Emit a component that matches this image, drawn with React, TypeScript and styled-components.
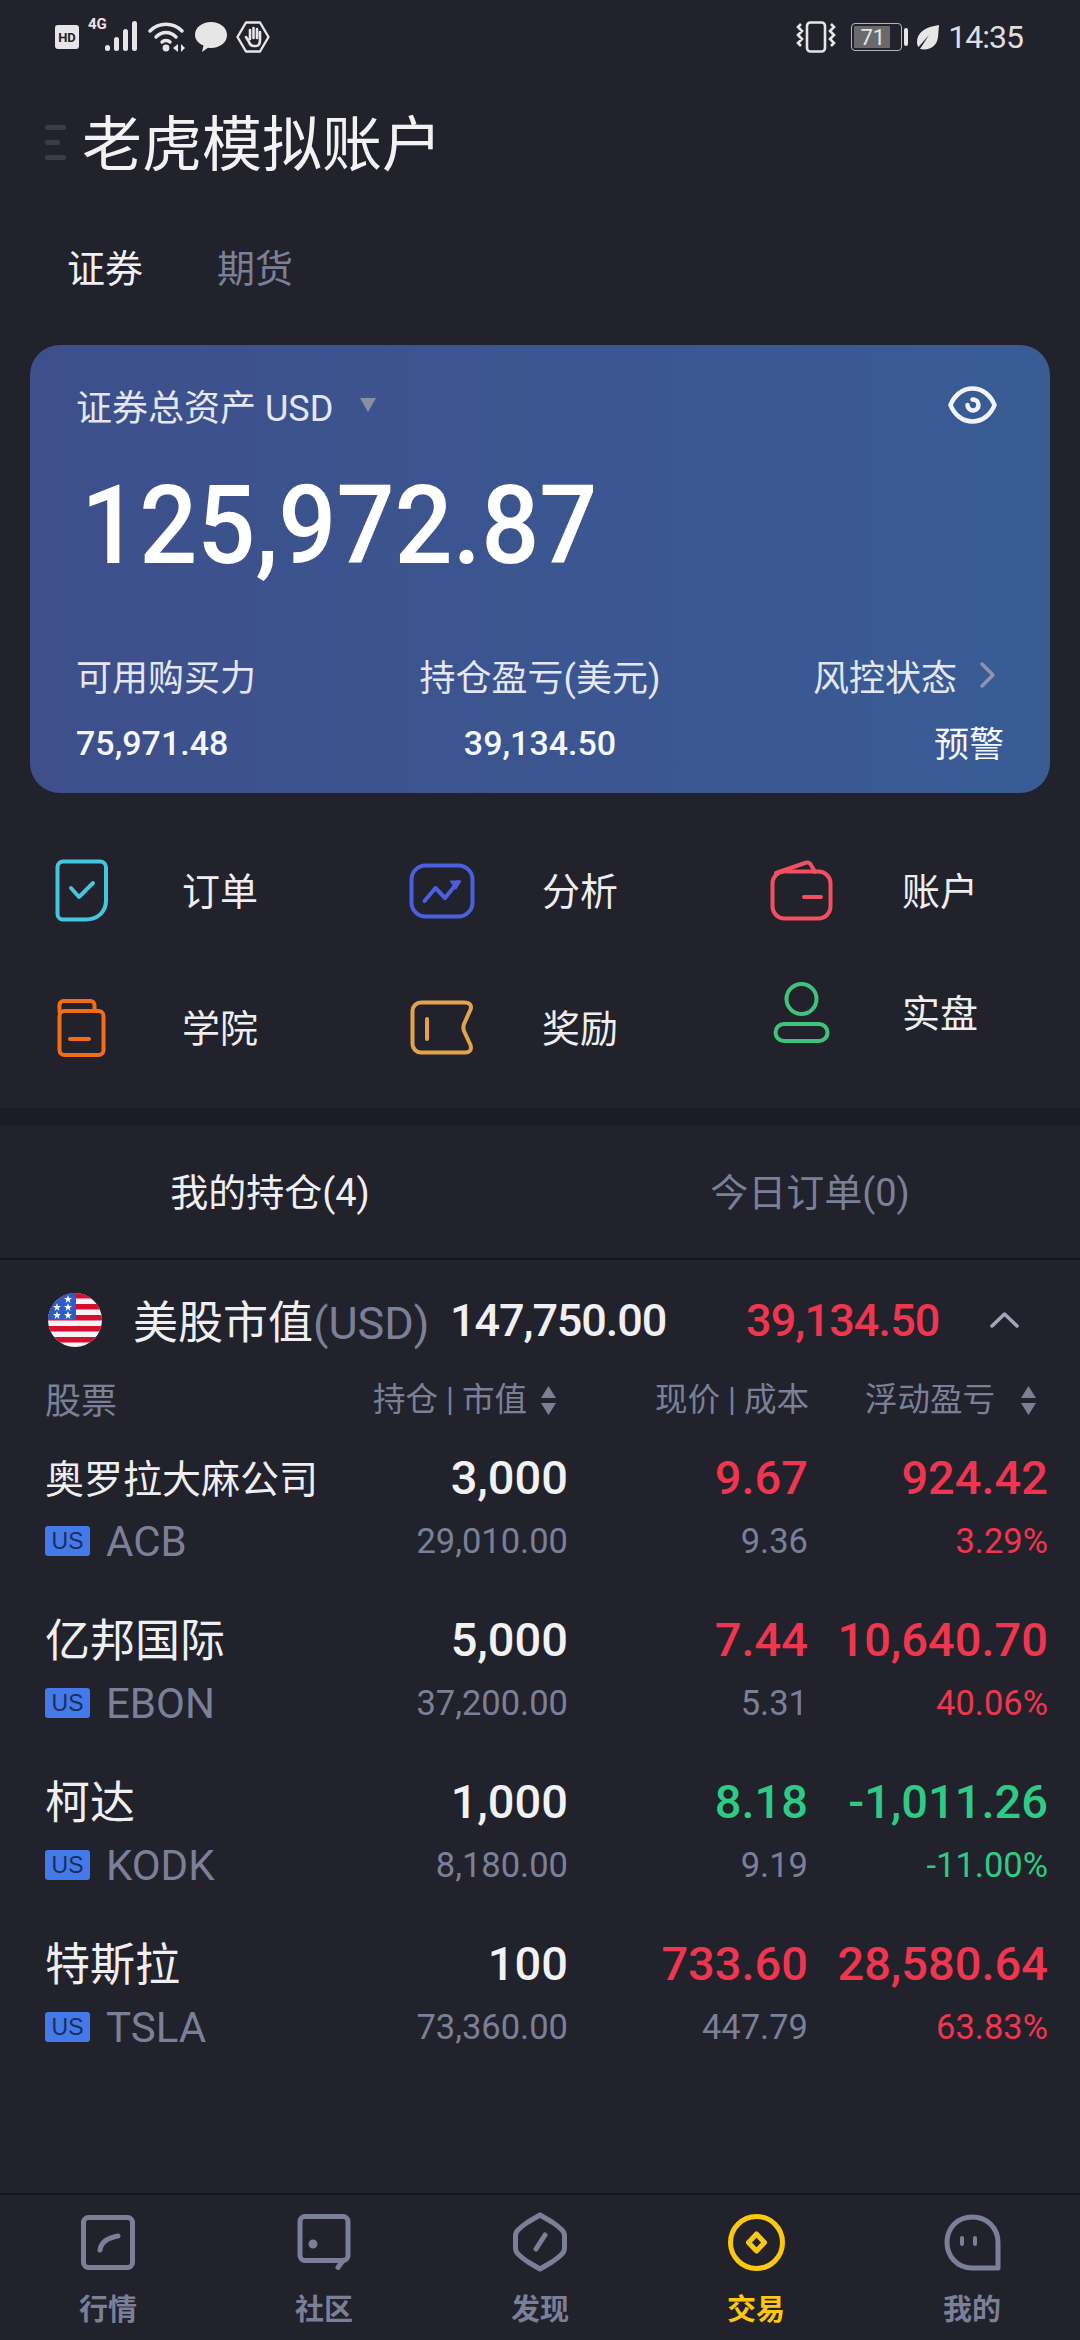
import React from 'react';
import styled, { createGlobalStyle } from 'styled-components';

const RED = '#f0364f';
const GREEN = '#2fcb85';
const MUTED = '#7b8098';
const BG = '#21222c';

const GlobalStyle = createGlobalStyle`
  html, body { margin: 0; padding: 0; background: ${BG}; }
  * { box-sizing: border-box; }
`;

interface Holding {
  name: string;
  code: string;
  qty: string;
  value: string;
  price: string;
  cost: string;
  pnl: string;
  pct: string;
  down?: boolean;
}

const holdings: Holding[] = [
  { name: '奥罗拉大麻公司', code: 'ACB', qty: '3,000', value: '29,010.00', price: '9.67', cost: '9.36', pnl: '924.42', pct: '3.29%' },
  { name: '亿邦国际', code: 'EBON', qty: '5,000', value: '37,200.00', price: '7.44', cost: '5.31', pnl: '10,640.70', pct: '40.06%' },
  { name: '柯达', code: 'KODK', qty: '1,000', value: '8,180.00', price: '8.18', cost: '9.19', pnl: '-1,011.26', pct: '-11.00%', down: true },
  { name: '特斯拉', code: 'TSLA', qty: '100', value: '73,360.00', price: '733.60', cost: '447.79', pnl: '28,580.64', pct: '63.83%' },
];

const Ico: React.FC<{ w: number; h: number; children: React.ReactNode; color?: string; sw?: number }> = ({ w, h, children, color = 'currentColor', sw = 4 }) => (
  <svg width={w} height={h} viewBox={`0 0 ${w} ${h}`} fill="none" stroke={color} strokeWidth={sw} strokeLinecap="round" strokeLinejoin="round">
    {children}
  </svg>
);

const App: React.FC = () => {
  return (
    <Screen>
      <GlobalStyle />
      <StatusBar>
        <StatusGroup>
          <svg width="24" height="24" viewBox="0 0 24 24"><rect width="24" height="24" rx="3" fill="#e6e6e6" /><text x="12" y="17" fontSize="13" fontWeight="700" textAnchor="middle" fill={BG} fontFamily="Roboto, sans-serif">HD</text></svg>
          <Signal>
            <SignalLabel>4G</SignalLabel>
            <svg width="34" height="32" viewBox="0 0 34 32" fill="#e6e6e6">
              <rect x="0" y="24" width="5" height="6" rx="2.5" />
              <rect x="9" y="16" width="5" height="14" rx="2.5" />
              <rect x="18" y="8" width="5" height="22" rx="2.5" />
              <rect x="27" y="0" width="5" height="30" rx="2.5" />
            </svg>
          </Signal>
          <svg width="38" height="32" viewBox="0 0 38 32" fill="none" stroke="#e6e6e6" strokeWidth="3.4" strokeLinecap="round">
            <path d="M2 10C11 1 25 1 34 10" />
            <path d="M8 16C14 10 22 10 28 16" />
            <path d="M14 21C16 19 20 19 22 21" />
            <circle cx="18" cy="27" r="3.4" fill="#e6e6e6" stroke="none" />
            <path d="M30 23l-5 4 5 4zM33 23l4 4-4 4z" fill="#e6e6e6" stroke="none" />
          </svg>
          <svg width="32" height="32" viewBox="0 0 32 32" fill="#e6e6e6"><path d="M16 1c9 0 16 5.500 16 13s-7 13-16 13c-1 0-2 0-3-.2L7 31l1.500-6.500C3.500 22.500 0 18.500 0 14 0 6.500 7 1 16 1z" /></svg>
          <svg width="34" height="32" viewBox="0 0 34 32" fill="none" stroke="#e6e6e6" strokeWidth="2.400" strokeLinejoin="round">
            <path d="M10 1.500h14L32.500 16 24 30.500H10L1.500 16z" />
            <path d="M10 16l3 5c1 3 3 4 5 4h2c3 0 4-3 4-6v-8M14 18V9M17.500 17V7M21 17V8" strokeWidth="2.600" strokeLinecap="round" />
          </svg>
        </StatusGroup>
        <StatusGroup $tight>
          <svg width="40" height="32" viewBox="0 0 40 32" fill="none" stroke="#e6e6e6" strokeWidth="2.600">
            <rect x="11" y="1.500" width="18" height="29" rx="3.500" />
            <path d="M5 3l-3 3 4 4-4 4 4 4-4 4 3 3M35 3l3 3-4 4 4 4-4 4 4 4-3 3" />
          </svg>
          <Battery>
            <BatteryShell>
              <BatteryFill />
              <BatteryText>71</BatteryText>
            </BatteryShell>
            <BatteryCap />
          </Battery>
          <svg width="24" height="26" viewBox="0 0 24 26" fill="#e6e6e6"><path d="M23 1C10 3 1 8 1 18c0 2 .5 4 1.500 5L13 11 4 25c10 2 17-3 18-12 .4-4 .6-8 1-12z" /></svg>
          <Clock>14:35</Clock>
        </StatusGroup>
      </StatusBar>

      <TitleRow>
        <MenuBars>
          <MenuBar />
          <MenuBar $short />
          <MenuBar />
        </MenuBars>
        <Title>老虎模拟账户</Title>
      </TitleRow>

      <TopTabs>
        <TopTab $active>证券</TopTab>
        <TopTab>期货</TopTab>
      </TopTabs>

      <AssetCard>
        <CardHead>
          <CardLabel>
            证券总资产 USD
            <Caret />
          </CardLabel>
          <svg width="49" height="38" viewBox="0 0 49 38" fill="none" stroke="#f2f4fa" strokeWidth="4.500" strokeLinecap="round">
            <path d="M24.500 2.500C35 2.500 43 10 46.500 19 43 28 35 35.500 24.500 35.500S6 28 2.500 19C6 10 14 2.500 24.500 2.500z" />
            <path d="M19.500 19a5.500 5.500 0 1 0 5-5.500" />
          </svg>
        </CardHead>
        <Total>125,972.87</Total>
        <CardStats>
          <CardStat>
            <StatLabel>可用购买力</StatLabel>
            <StatValue>75,971.48</StatValue>
          </CardStat>
          <CardStat $align="center">
            <StatLabel>持仓盈亏(美元)</StatLabel>
            <StatValue>39,134.50</StatValue>
          </CardStat>
          <CardStat $align="flex-end">
            <StatLabel $pad>
              风控状态
              <svg width="18" height="28" viewBox="0 0 18 28" fill="none" stroke="#8f93ad" strokeWidth="3.500" strokeLinecap="round" strokeLinejoin="round"><path d="M3 3l11 11L3 25" /></svg>
            </StatLabel>
            <StatCn>预警</StatCn>
          </CardStat>
        </CardStats>
      </AssetCard>

      <Shortcuts>
        <Shortcut>
          <ShortcutIcon>
            <Ico w={53} h={63} color="#46c5df">
              <path d="M8 2.500h37a6 6 0 0 1 6 6v33c0 11-8 19-20 19H8a5.500 5.500 0 0 1-5.500-5.500V8A5.500 5.500 0 0 1 8 2.500z" />
              <path d="M16 29l8 9 14-14" />
            </Ico>
          </ShortcutIcon>
          <ShortcutLabel>订单</ShortcutLabel>
        </Shortcut>
        <Shortcut>
          <ShortcutIcon>
            <Ico w={66} h={56} color="#4b60e0">
              <rect x="2.500" y="2.500" width="61" height="51" rx="14" />
              <path d="M15.500 38l11-13 9.500 10 13-16" />
              <path d="M41.500 18h10.500l-5 8z" fill="#4b60e0" strokeWidth="1" />
            </Ico>
          </ShortcutIcon>
          <ShortcutLabel>分析</ShortcutLabel>
        </Shortcut>
        <Shortcut>
          <ShortcutIcon>
            <Ico w={63} h={61} color="#f0505f">
              <rect x="2.500" y="11.500" width="58" height="47" rx="12" />
              <path d="M6 13L35 3c3-1 5 0 6 2l4 7M34 37h17" />
            </Ico>
          </ShortcutIcon>
          <ShortcutLabel>账户</ShortcutLabel>
        </Shortcut>
        <Shortcut>
          <ShortcutIcon>
            <Ico w={49} h={58} color="#f26d18">
              <path d="M2.500 13V6a4 4 0 0 1 4-4h27a4 4 0 0 1 4 4v6" />
              <rect x="2.500" y="12" width="44" height="44" rx="5" />
              <path d="M13 40h19" />
            </Ico>
          </ShortcutIcon>
          <ShortcutLabel>学院</ShortcutLabel>
        </Shortcut>
        <Shortcut>
          <ShortcutIcon>
            <Ico w={63} h={55} color="#e3a34b">
              <path d="M11 2.500h43c6 0 8 3 6.500 7L54 24c-1 3-1 4 0 7l6.500 14c1.500 5-1 7.500-5 7.500H11A8.500 8.500 0 0 1 2.500 44V11A8.500 8.500 0 0 1 11 2.500z" />
              <path d="M17 19v20" />
            </Ico>
          </ShortcutIcon>
          <ShortcutLabel>奖励</ShortcutLabel>
        </Shortcut>
        <Shortcut $raised>
          <ShortcutIcon>
            <Ico w={57} h={61} color="#3fc27a">
              <circle cx="28.500" cy="17" r="15" />
              <rect x="2.500" y="42" width="52" height="17" rx="8.500" />
            </Ico>
          </ShortcutIcon>
          <ShortcutLabel>实盘</ShortcutLabel>
        </Shortcut>
      </Shortcuts>

      <Divider />

      <HoldTabs>
        <HoldTab $active>我的持仓(4)</HoldTab>
        <HoldTab>今日订单(0)</HoldTab>
      </HoldTabs>

      <MarketRow>
        <svg width="54" height="54" viewBox="0 0 54 54">
          <defs>
            <clipPath id="flag"><circle cx="27" cy="27" r="27" /></clipPath>
          </defs>
          <g clipPath="url(#flag)">
            <rect width="54" height="54" fill="#f4f4f6" />
            <rect y="0" width="54" height="5.500" fill="#d5102e" />
            <rect y="11" width="54" height="5.500" fill="#d5102e" />
            <rect y="22" width="54" height="5.500" fill="#d5102e" />
            <rect y="33" width="54" height="5.500" fill="#d5102e" />
            <rect y="44" width="54" height="5.500" fill="#d5102e" />
            <rect width="28" height="27" fill="#2c5cc5" />
            <g fill="#fff">
              <path d="M20 2l1 3h3l-2.500 2 1 3-2.500-2-2.500 2 1-3L16 5h3z" />
              <path d="M9 10l1 3h3l-2.500 2 1 3L9 16l-2.500 2 1-3L5 13h3z" />
              <path d="M20 10l1 3h3l-2.500 2 1 3-2.500-2-2.500 2 1-3L16 13h3z" />
              <path d="M9 18l1 3h3l-2.500 2 1 3L9 24l-2.500 2 1-3L5 21h3z" />
              <path d="M20 18l1 3h3l-2.500 2 1 3-2.500-2-2.500 2 1-3L16 21h3z" />
            </g>
          </g>
        </svg>
        <MarketName>美股市值<MarketCcy>(USD)</MarketCcy></MarketName>
        <MarketValue>147,750.00</MarketValue>
        <MarketPnl>39,134.50</MarketPnl>
        <svg width="29" height="16" viewBox="0 0 29 16" fill="none" stroke="#a3a6ba" strokeWidth="3.500" strokeLinecap="round" strokeLinejoin="round"><path d="M2 14L14.500 2 27 14" /></svg>
      </MarketRow>

      <ColumnHead>
        <HeadName>股票</HeadName>
        <HeadCell>持仓 | 市值<SortIcon /></HeadCell>
        <HeadCell>现价 | 成本</HeadCell>
        <HeadCell $wide>浮动盈亏<SortIcon /></HeadCell>
      </ColumnHead>

      <HoldingList>
        {holdings.map(h => (
          <HoldingRow key={h.code}>
            <StockName $long={h.name.length > 6}>{h.name}</StockName>
            <Big>{h.qty}</Big>
            <Big $color={h.down ? GREEN : RED}>{h.price}</Big>
            <Big $color={h.down ? GREEN : RED}>{h.pnl}</Big>
            <CodeCell>
              <UsBadge>US</UsBadge>
              <Code>{h.code}</Code>
            </CodeCell>
            <Small>{h.value}</Small>
            <Small>{h.cost}</Small>
            <Small $color={h.down ? GREEN : RED}>{h.pct}</Small>
          </HoldingRow>
        ))}
      </HoldingList>

      <BottomNav>
        <NavItem>
          <NavIcon>
            <Ico w={54} h={55} color={MUTED} sw={5}>
              <rect x="2.500" y="2.500" width="49" height="50" rx="5" />
              <path d="M19 35c1-7 6-12 18-14" />
            </Ico>
          </NavIcon>
          <NavLabel>行情</NavLabel>
        </NavItem>
        <NavItem>
          <NavIcon>
            <Ico w={54} h={56} color={MUTED} sw={5}>
              <path d="M8 2.500h38a5 5 0 0 1 5 5v34a5 5 0 0 1-5 5H8a5 5 0 0 1-5-5v-34a5 5 0 0 1 5-5z" />
              <path d="M46 46.500l-5 7" />
              <circle cx="16" cy="30" r="3" fill={MUTED} strokeWidth="3" />
            </Ico>
          </NavIcon>
          <NavLabel>社区</NavLabel>
        </NavItem>
        <NavItem>
          <NavIcon>
            <Ico w={54} h={60} color={MUTED} sw={5}>
              <path d="M27 3l12 7c3 2 6 4 10 8 2 2 2.500 3 2.500 6v12c0 3-.5 4-2.500 6-4 4-7 6-10 8l-12 7-12-7c-3-2-6-4-10-8-2-2-2.500-3-2.500-6V24c0-3 .5-4 2.500-6 4-4 7-6 10-8z" />
              <path d="M23 37l9-14" />
            </Ico>
          </NavIcon>
          <NavLabel>发现</NavLabel>
        </NavItem>
        <NavItem $active>
          <NavIcon>
            <Ico w={57} h={57} color="#fcc80f" sw={5}>
              <circle cx="28.500" cy="28.500" r="26" />
              <path d="M28.500 20l8 8.500-8 8.500-8-8.500z" />
            </Ico>
          </NavIcon>
          <NavLabel>交易</NavLabel>
        </NavItem>
        <NavItem>
          <NavIcon>
            <Ico w={57} h={57} color={MUTED} sw={5}>
              <path d="M54 54H28C13 54 3 42 3 28.500 3 13 14 3 28.500 3S54 14 54 28.500z" />
              <path d="M18 24v6M31 24v6" strokeWidth="4" />
            </Ico>
          </NavIcon>
          <NavLabel>我的</NavLabel>
        </NavItem>
      </BottomNav>
    </Screen>
  );
};

const SANS = `Roboto, "Noto Sans CJK SC", sans-serif`;

const Screen = styled.div`
  width: 1080px;
  height: 2340px;
  background: ${BG};
  display: flex;
  flex-direction: column;
  overflow: hidden;
  font-family: ${SANS};
  color: #f0f0f2;
`;

const StatusBar = styled.div`
  height: 74px;
  padding: 0 57px 0 55px;
  display: flex;
  align-items: center;
  justify-content: space-between;
`;

const StatusGroup = styled.div<{ $tight?: boolean }>`
  display: flex;
  align-items: center;
  gap: ${p => (p.$tight ? 8 : 9)}px;
`;

const Signal = styled.div`
  display: flex;
  align-items: flex-end;
  position: relative;
  padding-left: 17px;
`;

const SignalLabel = styled.span`
  position: absolute;
  left: 0;
  top: -6px;
  font-size: 15px;
  font-weight: 700;
  color: #e6e6e6;
`;

const Battery = styled.div`
  display: flex;
  align-items: center;
  gap: 2px;
  margin-left: 7px;
`;

const BatteryShell = styled.div`
  position: relative;
  width: 51px;
  height: 28px;
  border: 1.500px solid #b5b5b8;
  border-radius: 4px;
  display: flex;
  align-items: center;
  justify-content: center;
`;

const BatteryFill = styled.div`
  position: absolute;
  left: 2px;
  top: 2px;
  bottom: 2px;
  width: 36px;
  background: #6a6a6d;
  border-radius: 1px;
`;

const BatteryText = styled.span`
  position: relative;
  font-size: 22px;
  color: #e6e6e6;
  margin-right: 8px;
`;

const BatteryCap = styled.div`
  width: 4px;
  height: 18px;
  background: #e6e6e6;
  border-radius: 2px;
`;

const Clock = styled.span`
  font-size: 32px;
  letter-spacing: -1px;
  color: #dedee0;
`;

const TitleRow = styled.div`
  height: 136px;
  padding-left: 45px;
  display: flex;
  align-items: center;
  gap: 15px;
`;

const MenuBars = styled.div`
  display: flex;
  flex-direction: column;
  gap: 10px;
  width: 22px;
`;

const MenuBar = styled.div<{ $short?: boolean }>`
  height: 5px;
  width: ${p => (p.$short ? 15 : 21)}px;
  background: #3a3c49;
  border-radius: 2px;
`;

const Title = styled.h1`
  margin: 0;
  padding-bottom: 6px;
  font-size: 60px;
  font-weight: 400;
  color: #f2f2f2;
`;

const TopTabs = styled.div`
  height: 64px;
  margin-top: 26px;
  padding: 0 0 6px 67px;
  display: flex;
  align-items: center;
  gap: 74px;
`;

const TopTab = styled.div<{ $active?: boolean }>`
  font-size: 38px;
  color: ${p => (p.$active ? '#f0f0f2' : MUTED)};
`;

const AssetCard = styled.div`
  margin: 45px 30px 0;
  height: 448px;
  border-radius: 30px;
  background: linear-gradient(90deg, #3e4f8b 0%, #395c95 100%);
  padding: 41px 46px 28px;
  display: flex;
  flex-direction: column;
`;

const CardHead = styled.div`
  display: flex;
  justify-content: space-between;
  align-items: center;
  height: 38px;
  padding-right: 7px;
`;

const CardLabel = styled.div`
  font-size: 36px;
  color: #e4e7f2;
  display: flex;
  align-items: center;
  gap: 27px;
`;

const Caret = styled.span`
  width: 0;
  height: 0;
  border-left: 8.500px solid transparent;
  border-right: 8.500px solid transparent;
  border-top: 14px solid #8a8fa8;
`;

const Total = styled.div`
  font-size: 110px;
  font-weight: 500;
  color: #fff;
  line-height: 100px;
  margin-top: 52px;
  margin-left: 5px;
  transform: scaleX(0.93);
  transform-origin: left center;
`;

const CardStats = styled.div`
  display: grid;
  grid-template-columns: 1fr 1fr 1fr;
  margin-top: auto;
`;

const CardStat = styled.div<{ $align?: string }>`
  display: flex;
  flex-direction: column;
  align-items: ${p => p.$align ?? 'flex-start'};
  gap: 24px;
`;

const StatLabel = styled.div<{ $pad?: boolean }>`
  font-size: 36px;
  color: #e4e7f2;
  display: flex;
  align-items: center;
  gap: 22px;
  height: 44px;
  white-space: nowrap;
  padding-right: ${p => (p.$pad ? '7px' : '0')};
`;

const StatValue = styled.div`
  font-size: 34px;
  font-weight: 500;
  color: #f6f7fb;
  height: 44px;
  line-height: 44px;
`;

const StatCn = styled(StatValue)`
  font-size: 35px;
  font-weight: 400;
  line-height: 50px;
`;

const Shortcuts = styled.div`
  display: grid;
  grid-template-columns: 360px 360px 360px;
  grid-auto-rows: 137px;
  padding-top: 29px;
  height: 315px;
`;

const Shortcut = styled.div<{ $raised?: boolean }>`
  display: flex;
  align-items: center;
  gap: 19px;
  margin-top: ${p => (p.$raised ? '-30px' : '0')};
`;

const ShortcutIcon = styled.div`
  width: 163px;
  display: flex;
  justify-content: center;
`;

const ShortcutLabel = styled.span`
  font-size: 38px;
  padding-bottom: 5px;
  color: #eeeef0;
`;

const Divider = styled.div`
  height: 18px;
  background: #1b1c24;
`;

const HoldTabs = styled.div`
  height: 134px;
  display: grid;
  grid-template-columns: 1fr 1fr;
  border-bottom: 2px solid #15161c;
`;

const HoldTab = styled.div<{ $active?: boolean }>`
  display: flex;
  align-items: center;
  justify-content: center;
  padding-bottom: 5px;
  font-size: 38px;
  color: ${p => (p.$active ? '#f0f0f2' : MUTED)};
`;

const MarketRow = styled.div`
  display: flex;
  align-items: center;
  height: 120px;
  padding-left: 48px;
`;

const MarketName = styled.div`
  font-size: 45px;
  margin-left: 31px;
  padding-bottom: 2px;
  width: 317px;
  white-space: nowrap;
  color: #efeff1;
`;

const MarketCcy = styled.span`
  color: ${MUTED};
`;

const MarketValue = styled.div`
  font-size: 45px;
  font-weight: 500;
  letter-spacing: -1.1px;
  width: 296px;
`;

const MarketPnl = styled.div`
  font-size: 45px;
  font-weight: 500;
  letter-spacing: -0.9px;
  color: ${RED};
  width: 244px;
`;

const ColumnHead = styled.div`
  display: grid;
  grid-template-columns: 300px 211px 253px 227px;
  grid-template-rows: 40px;
  padding-left: 45px;
  height: 40px;
  align-items: center;
  color: ${MUTED};
`;

const HeadName = styled.span`
  font-size: 36px;
  line-height: 40px;
  padding-top: 3px;
`;

const HeadCell = styled.span<{ $wide?: boolean }>`
  font-size: 32.500px;
  line-height: 40px;
  display: flex;
  align-items: center;
  justify-content: flex-end;
  gap: ${p => (p.$wide ? '26px' : '14px')};
  white-space: nowrap;
`;

const SortIcon: React.FC = () => (
  <svg width="15" height="29" viewBox="0 0 15 29" fill={MUTED}>
    <path d="M7.500 0L15 12H0zM7.500 29L0 17h15z" />
  </svg>
);

const HoldingList = styled.div`
  display: flex;
  flex-direction: column;
  padding: 0 32px 0 45px;
  margin-top: 22px;
`;

const HoldingRow = styled.div`
  height: 162px;
  display: grid;
  grid-template-columns: 283px 240px 240px 240px;
  grid-template-rows: 70px 58px;
  align-items: center;
  justify-items: end;
`;

const StockName = styled.div<{ $long?: boolean }>`
  justify-self: start;
  font-size: ${p => (p.$long ? 39 : 45)}px;
  padding-bottom: 3px;
  white-space: nowrap;
  color: #efeff1;
`;

const Big = styled.div<{ $color?: string }>`
  font-size: 47px;
  font-weight: 500;
  color: ${p => p.$color ?? '#f2f2f4'};
`;

const Small = styled.div<{ $color?: string }>`
  font-size: 34.500px;
  color: ${p => p.$color ?? MUTED};
`;

const CodeCell = styled.div`
  justify-self: start;
  display: flex;
  align-items: center;
  gap: 16px;
`;

const UsBadge = styled.span`
  width: 45px;
  height: 30px;
  background: #4479ea;
  color: #1c2d5a;
  border-radius: 3px;
  font-family: "Liberation Sans", sans-serif;
  font-size: 23px;
  display: flex;
  align-items: center;
  justify-content: center;
`;

const Code = styled.span`
  font-size: 42px;
  color: ${MUTED};
`;

const BottomNav = styled.nav`
  margin-top: auto;
  height: 147px;
  border-top: 2px solid #14151b;
  display: grid;
  grid-template-columns: repeat(5, 1fr);
`;

const NavItem = styled.div<{ $active?: boolean }>`
  display: flex;
  flex-direction: column;
  align-items: center;
  padding-top: 17px;
  gap: 20px;
  color: ${p => (p.$active ? '#fcc80f' : MUTED)};
`;

const NavIcon = styled.div`
  height: 60px;
  display: flex;
  align-items: center;
`;

const NavLabel = styled.span`
  font-size: 29px;
  line-height: 36px;
  font-weight: 700;
`;

export default App;
